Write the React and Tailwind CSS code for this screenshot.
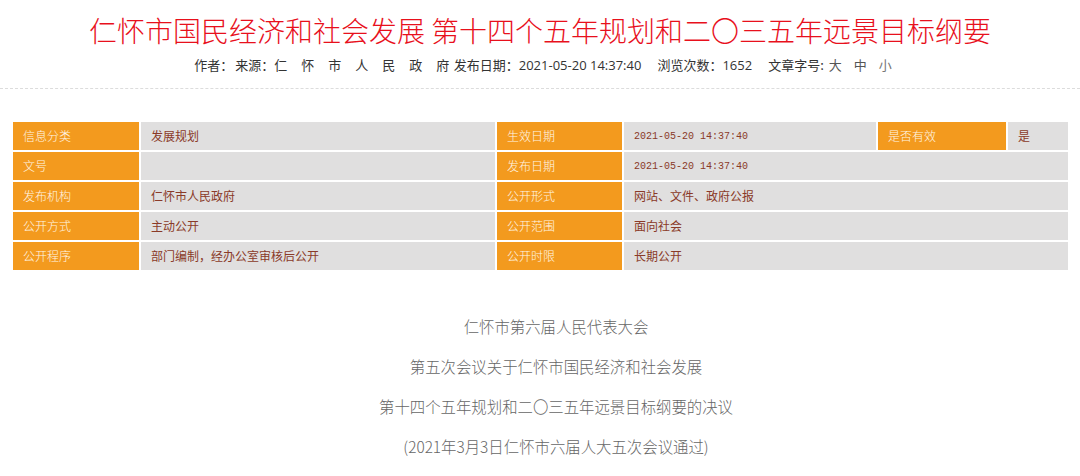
const rows = [
  { k1: '信息分类', v1: '发展规划', k2: '生效日期', v2: '2021-05-20 14:37:40', mono: true, k3: '是否有效', v3: '是' },
  { k1: '文号', v1: '', k2: '发布日期', v2: '2021-05-20 14:37:40', mono: true },
  { k1: '发布机构', v1: '仁怀市人民政府', k2: '公开形式', v2: '网站、文件、政府公报' },
  { k1: '公开方式', v1: '主动公开', k2: '公开范围', v2: '面向社会' },
  { k1: '公开程序', v1: '部门编制，经办公室审核后公开', k2: '公开时限', v2: '长期公开' },
];

const lines = [
  '仁怀市第六届人民代表大会',
  '第五次会议关于仁怀市国民经济和社会发展',
  '第十四个五年规划和二〇三五年远景目标纲要的决议',
  '(2021年3月3日仁怀市六届人大五次会议通过)',
];

function Label({ children }) {
  return (
    <div className="flex h-[28px] items-center bg-[#f39a1e] pl-[10px] text-[12px] font-light text-[#fff6e6]">
      {children}
    </div>
  );
}

function Value({ children, mono, className = '' }) {
  return (
    <div
      className={`flex h-[28px] items-center bg-[#e0dfdf] pl-[10px] text-[#8a3a28] ${
        mono ? "font-['Liberation_Mono'] text-[10px]" : 'text-[12px]'
      } ${className}`}
    >
      {children}
    </div>
  );
}

export default function App() {
  return (
    <div className="h-[476px] w-[1080px] overflow-hidden bg-white font-['Noto_Sans_CJK_SC','Noto_Sans',sans-serif]">
      <h1 className="pt-[12px] text-center text-[28px] font-light leading-[36px] text-[#e8101c]">
        仁怀市国民经济和社会发展 第十四个五年规划和二〇三五年远景目标纲要
      </h1>
      <div className="mt-[8px] pl-[6px] text-center text-[13px] leading-[18px] text-[#333]">
        <span>作者：</span>
        <span className="ml-[2px]">来源：</span>
        <span className="tracking-[0.5px]">仁　怀　市　人　民　政　府</span>
        <span className="ml-[4px]">发布日期：</span>
        <span className="font-['Open_Sans']">2021-05-20 14:37:40</span>
        <span className="ml-[16px]">浏览次数：</span>
        <span className="font-['Open_Sans']">1652</span>
        <span className="ml-[16px]">文章字号:</span>
        <span className="ml-[5px] text-[#555]">大</span>
        <span className="ml-[12px] text-[#555]">中</span>
        <span className="ml-[12px] text-[#777]">小</span>
      </div>
      <div className="mt-[14px] border-b border-dashed border-[#dcdcdc]" />

      <div className="ml-[13px] mt-[33px] grid w-[1055px] grid-cols-[126px_354px_125px_252px_128px_60px] gap-[2px]">
        {rows.map((r) => (
          <div key={r.k1} className="contents">
            <Label>{r.k1}</Label>
            <Value>{r.v1}</Value>
            <Label>{r.k2}</Label>
            {r.k3 ? (
              <>
                <Value mono={r.mono}>{r.v2}</Value>
                <Label>{r.k3}</Label>
                <Value>{r.v3}</Value>
              </>
            ) : (
              <Value mono={r.mono} className="col-span-3">
                {r.v2}
              </Value>
            )}
          </div>
        ))}
      </div>

      <div className="mt-[36px] pl-[32px] text-center text-[15.4px] font-light leading-[40px] text-[#666]">
        {lines.map((l) => (
          <p key={l}>{l}</p>
        ))}
      </div>
    </div>
  );
}
